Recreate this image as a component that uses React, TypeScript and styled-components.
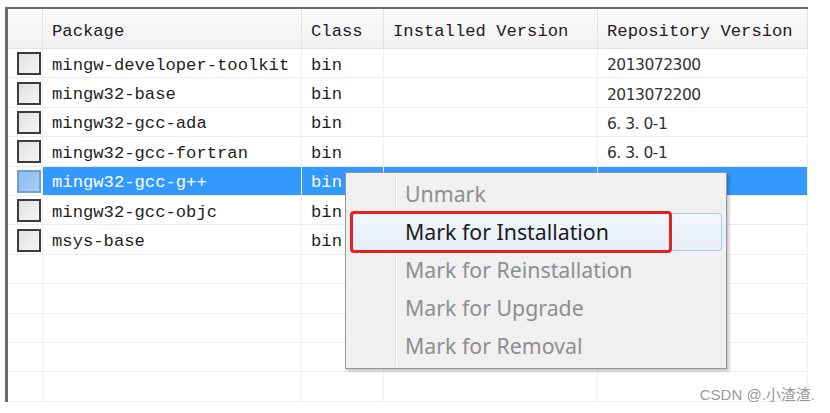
import React from "react";
import styled, { createGlobalStyle } from "styled-components";

const Global = createGlobalStyle`
  html, body { margin: 0; padding: 0; background: #ffffff; }
  body { width: 830px; height: 413px; overflow: hidden; position: relative; }
`;

const Page = styled.div`
  position: relative;
  width: 830px;
  height: 413px;
  padding: 7px 0 0 5px;
  box-sizing: border-box;
`;

const Table = styled.div`
  width: 803px;
  border-left: 3px solid #6b6b6b;
  border-top: 2px solid #6b6b6b;
  box-sizing: border-box;
  font-family: "Liberation Mono", "DejaVu Sans Mono", monospace;
  font-size: 17.2px;
  color: #1e1e1e;
`;

const cols = "35px 259px 82px 214px 210px";

const Header = styled.div`
  display: grid;
  grid-template-columns: ${cols};
  height: 40px;
  background: linear-gradient(#fbfbfb, #f1f1f1);
  border-bottom: 1px solid #e4e4e4;
  box-sizing: border-box;
`;

const HeadCell = styled.div`
  display: flex;
  align-items: center;
  padding: 5px 0 0 9px;
  border-right: 1px solid #e2e2e2;
  white-space: nowrap;
  color: #222;
`;

const Row = styled.div`
  display: grid;
  grid-template-columns: ${cols};
  height: 29.4px;
  box-sizing: border-box;
  border-bottom: 1px solid #ececec;
`;

const Cell = styled.div<{ $sel?: boolean; $num?: boolean }>`
  display: flex;
  align-items: center;
  padding: 4px 0 0 9px;
  border-right: 1px solid #efefef;
  white-space: nowrap;
  overflow: hidden;
  background: ${(p) => (p.$sel ? "#3399ff" : "transparent")};
  font-family: ${(p) =>
    p.$num ? '"DejaVu Sans", "Liberation Sans", sans-serif' : "inherit"};
  font-size: ${(p) => (p.$num ? "15.5px" : "inherit")};
  letter-spacing: ${(p) => (p.$num ? "-0.5px" : "0")};
  color: ${(p) => (p.$sel ? "#ffffff" : p.$num ? "#333" : "#1e1e1e")};
`;

const CheckCell = styled.div`
  display: flex;
  align-items: center;
  padding: 1px 0 0 9px;
  border-right: 1px solid #efefef;
`;

const Box = styled.div<{ $sel?: boolean }>`
  width: 24px;
  height: 23px;
  box-sizing: border-box;
  border: 2px solid ${(p) => (p.$sel ? "#6f9fd6" : "#3c3c3c")};
  background: ${(p) =>
    p.$sel
      ? "linear-gradient(135deg, #8fbcef, #a9cdf5)"
      : "linear-gradient(135deg, #e0e0e0, #f6f6f6)"};
`;

const Menu = styled.div`
  position: absolute;
  left: 345px;
  top: 172px;
  width: 382px;
  height: 197px;
  box-sizing: border-box;
  border: 1px solid #979797;
  background: #f0f0f0;
  box-shadow: 2px 2px 3px rgba(0, 0, 0, 0.25);
  padding: 2px 0;
  font-family: "Noto Sans", "Open Sans", sans-serif;
  font-size: 21.3px;
  &::before {
    content: "";
    position: absolute;
    left: 49px;
    top: 2px;
    bottom: 2px;
    width: 1px;
    background: #e2e3e3;
    border-right: 1px solid #ffffff;
  }
`;

const Item = styled.div<{ $on?: boolean }>`
  position: relative;
  height: 38px;
  display: flex;
  align-items: center;
  color: ${(p) => (p.$on ? "#1b1b1b" : "#8e8e8e")};
  margin: 0 4px 0 6px;
  padding: 0 0 1px 52px;
  box-sizing: border-box;
  border-radius: 3px;
  border: 1px solid ${(p) => (p.$on ? "#aecbee" : "transparent")};
  background: ${(p) =>
    p.$on ? "linear-gradient(#f2f6fc, #e6eef9)" : "transparent"};
  z-index: 1;
`;

const RedMark = styled.div`
  position: absolute;
  left: -3px;
  top: -3px;
  width: 322px;
  height: 42px;
  box-sizing: border-box;
  border: 3px solid #e52222;
  border-radius: 4px;
`;

const Watermark = styled.div`
  position: absolute;
  right: 15px;
  bottom: 9px;
  font-family: "Liberation Sans", "Noto Sans CJK SC", sans-serif;
  font-size: 15px;
  color: #9a9a9a;
`;

type Pkg = { name: string; cls: string; inst: string; repo: string };

const data: Pkg[] = [
  { name: "mingw-developer-toolkit", cls: "bin", inst: "", repo: "2013072300" },
  { name: "mingw32-base", cls: "bin", inst: "", repo: "2013072200" },
  { name: "mingw32-gcc-ada", cls: "bin", inst: "", repo: "6. 3. 0-1" },
  { name: "mingw32-gcc-fortran", cls: "bin", inst: "", repo: "6. 3. 0-1" },
  { name: "mingw32-gcc-g++", cls: "bin", inst: "", repo: "6. 3. 0-1" },
  { name: "mingw32-gcc-objc", cls: "bin", inst: "", repo: "6. 3. 0-1" },
  { name: "msys-base", cls: "bin", inst: "", repo: "2013072300" },
];

const SELECTED = 4;

export default function App() {
  return (
    <>
      <Global />
      <Page>
        <Table>
          <Header>
            <HeadCell />
            <HeadCell>Package</HeadCell>
            <HeadCell>Class</HeadCell>
            <HeadCell>Installed Version</HeadCell>
            <HeadCell>Repository Version</HeadCell>
          </Header>
          {data.map((d, i) => {
            const sel = i === SELECTED;
            return (
              <Row key={d.name}>
                <CheckCell>
                  <Box $sel={sel} />
                </CheckCell>
                <Cell $sel={sel}>{d.name}</Cell>
                <Cell $sel={sel}>{d.cls}</Cell>
                <Cell $sel={sel}>{d.inst}</Cell>
                <Cell $sel={sel} $num>
                  {d.repo}
                </Cell>
              </Row>
            );
          })}
          {Array.from({ length: 5 }).map((_, i) => (
            <Row key={"e" + i}>
              <CheckCell />
              <Cell />
              <Cell />
              <Cell />
              <Cell />
            </Row>
          ))}
        </Table>
        <Menu>
          <Item>Unmark</Item>
          <Item $on>
            <RedMark />
            Mark for Installation
          </Item>
          <Item>Mark for Reinstallation</Item>
          <Item>Mark for Upgrade</Item>
          <Item>Mark for Removal</Item>
        </Menu>
        <Watermark>CSDN @.小渣渣.</Watermark>
      </Page>
    </>
  );
}
